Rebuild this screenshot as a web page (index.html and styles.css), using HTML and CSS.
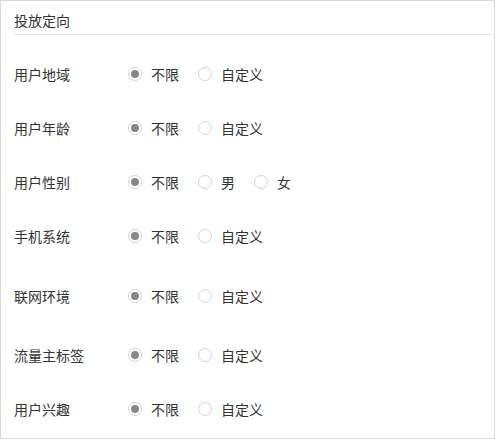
FILE: index.html
```html
<!DOCTYPE html>
<html lang="zh">
<head>
<meta charset="utf-8">
<link rel="stylesheet" href="styles.css">
</head>
<body>
<div class="panel">
  <div class="panel-head"><span class="title">投放定向</span></div>
  <div class="form">
    <div class="row">
      <div class="label">用户地域</div>
      <div class="group">
        <span class="radio checked"></span><span class="opt">不限</span>
        <span class="radio"></span><span class="opt">自定义</span>
      </div>
    </div>
    <div class="row">
      <div class="label">用户年龄</div>
      <div class="group">
        <span class="radio checked"></span><span class="opt">不限</span>
        <span class="radio"></span><span class="opt">自定义</span>
      </div>
    </div>
    <div class="row">
      <div class="label">用户性别</div>
      <div class="group">
        <span class="radio checked"></span><span class="opt">不限</span>
        <span class="radio"></span><span class="opt">男</span>
        <span class="radio"></span><span class="opt">女</span>
      </div>
    </div>
    <div class="row">
      <div class="label">手机系统</div>
      <div class="group">
        <span class="radio checked"></span><span class="opt">不限</span>
        <span class="radio"></span><span class="opt">自定义</span>
      </div>
    </div>
    <div class="row row-net">
      <div class="label">联网环境</div>
      <div class="group">
        <span class="radio checked"></span><span class="opt">不限</span>
        <span class="radio"></span><span class="opt">自定义</span>
      </div>
    </div>
    <div class="row row-flow">
      <div class="label">流量主标签</div>
      <div class="group">
        <span class="radio checked"></span><span class="opt">不限</span>
        <span class="radio"></span><span class="opt">自定义</span>
      </div>
    </div>
    <div class="row">
      <div class="label">用户兴趣</div>
      <div class="group">
        <span class="radio checked"></span><span class="opt">不限</span>
        <span class="radio"></span><span class="opt">自定义</span>
      </div>
    </div>
  </div>
</div>
</body>
</html>
```
FILE: styles.css
```css
html, body {
  margin: 0;
  padding: 0;
  background: #fff;
}
body {
  font-family: "Noto Sans CJK SC", "Microsoft YaHei", sans-serif;
  font-size: 14px;
  color: #333;
}
.panel {
  box-sizing: border-box;
  width: 495px;
  height: 439px;
  border: 1px solid #d9d9d9;
  background: #fff;
}
.panel-head {
  margin-left: 13px;
  padding-top: 9px;
  padding-bottom: 4px;
  border-bottom: 1px solid #e6e6e6;
}
.title {
  display: block;
  line-height: 20px;
}
.form {
  padding-top: 12px;
  padding-left: 13px;
}
.row {
  display: flex;
  align-items: center;
  height: 54px;
}
.row-net {
  margin-top: 6px;
}
.row-flow {
  margin-top: 5px;
}
.label {
  width: 114px;
  flex: none;
  line-height: 20px;
}
.group {
  display: flex;
  align-items: center;
  line-height: 20px;
}
.radio {
  box-sizing: border-box;
  width: 14px;
  height: 14px;
  border: 1px solid #d4d4d4;
  border-radius: 50%;
  background: #fff;
  display: flex;
  align-items: center;
  justify-content: center;
  margin-right: 9px;
}
.radio.checked::after {
  content: "";
  width: 8px;
  height: 8px;
  border-radius: 50%;
  background: #888;
}
.opt {
  margin-right: 19px;
}
```
